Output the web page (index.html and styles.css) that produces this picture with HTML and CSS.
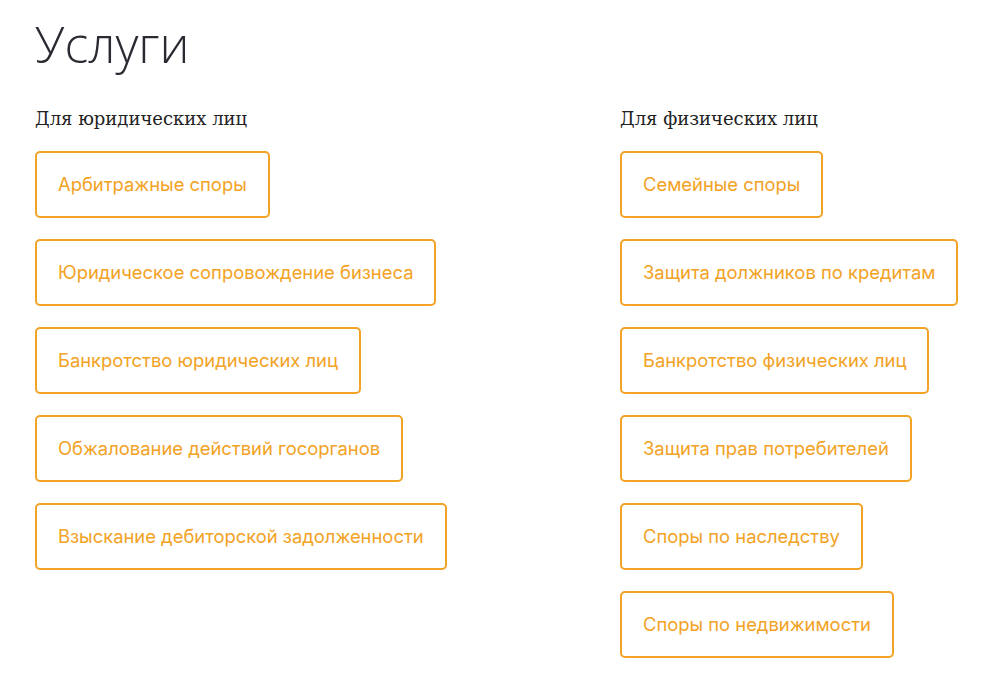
FILE: index.html
```html
<!DOCTYPE html>
<html lang="ru">
<head>
<meta charset="utf-8">
<title>Услуги</title>
<link rel="stylesheet" href="styles.css">
</head>
<body>
<main class="services">
  <h1 class="title">Услуги</h1>
  <div class="columns">
    <section class="col">
      <h2 class="col-title">Для юридических лиц</h2>
      <ul class="list">
        <li><a class="btn" href="#">Арбитражные споры</a></li>
        <li><a class="btn" href="#">Юридическое сопровождение бизнеса</a></li>
        <li><a class="btn" href="#">Банкротство юридических лиц</a></li>
        <li><a class="btn" href="#">Обжалование действий госорганов</a></li>
        <li><a class="btn" href="#">Взыскание дебиторской задолженности</a></li>
      </ul>
    </section>
    <section class="col">
      <h2 class="col-title">Для физических лиц</h2>
      <ul class="list">
        <li><a class="btn" href="#">Семейные споры</a></li>
        <li><a class="btn" href="#">Защита должников по кредитам</a></li>
        <li><a class="btn" href="#">Банкротство физических лиц</a></li>
        <li><a class="btn" href="#">Защита прав потребителей</a></li>
        <li><a class="btn" href="#">Споры по наследству</a></li>
        <li><a class="btn" href="#">Споры по недвижимости</a></li>
      </ul>
    </section>
  </div>
</main>
</body>
</html>
```
FILE: styles.css
```css
html, body {
  margin: 0;
  padding: 0;
  background: #ffffff;
}
.services {
  padding: 14px 0 0 35px;
}
.title {
  margin: 0;
  font-family: "Open Sans", sans-serif;
  font-weight: 300;
  font-size: 50px;
  line-height: 60px;
  color: #2a2a33;
}
.columns {
  display: grid;
  grid-template-columns: 585px 1fr;
  margin-top: 33px;
}
.col-title {
  margin: 0 0 20px;
  font-family: "DejaVu Serif", serif;
  font-weight: 400;
  font-size: 18px;
  line-height: 24px;
  color: #222;
}
.list {
  list-style: none;
  margin: 0;
  padding: 0;
  display: flex;
  flex-direction: column;
  align-items: flex-start;
  gap: 21px;
}
.btn {
  display: inline-block;
  box-sizing: border-box;
  height: 67px;
  line-height: 63px;
  padding: 0 21px;
  border: 2px solid #f2a224;
  border-radius: 5px;
  font-family: Inter, sans-serif;
  font-size: 18.4px;
  color: #f2a224;
  text-decoration: none;
  white-space: nowrap;
}
```
